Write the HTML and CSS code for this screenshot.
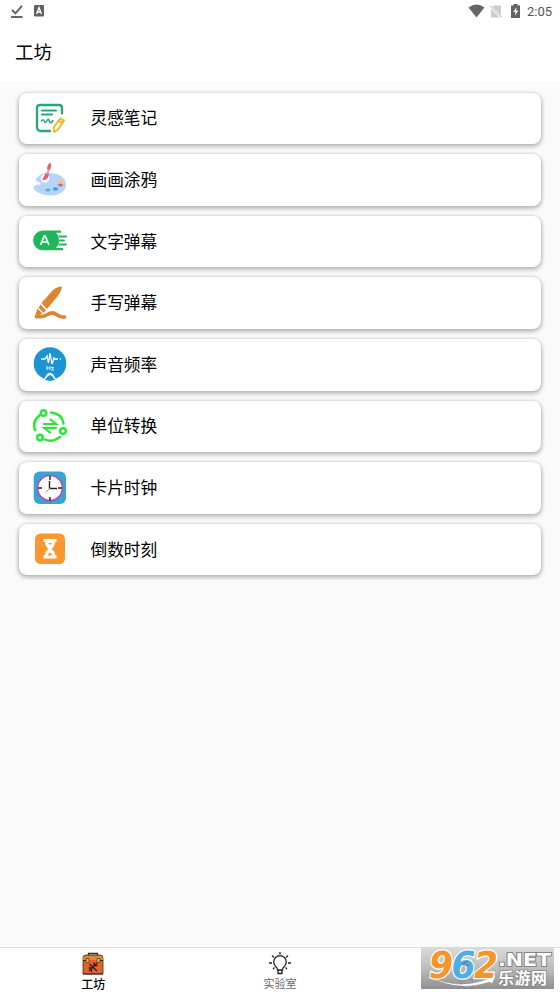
FILE: index.html
```html
<!DOCTYPE html>
<html lang="zh-CN">
<head>
<meta charset="utf-8">
<title>工坊</title>
<link rel="stylesheet" href="styles.css">
</head>
<body>
<div class="app">
  <div class="status">
    <svg class="s-check" width="14" height="15" viewBox="0 0 14 15"><path d="M2 6l3.400 3.300L12 1.800M1 13h11.500" fill="none" stroke="#666" stroke-width="2"/></svg>
    <svg class="s-lang" width="10" height="12" viewBox="0 0 10 12"><rect width="10" height="11.500" rx="1" fill="#626262"/><path d="M2.500 9L5 2.500 7.500 9M3.500 7h3" fill="none" stroke="#fff" stroke-width="1.300"/></svg>
    <span class="spacer"></span>
    <svg class="s-wifi" width="17" height="14" viewBox="0 0 17 14"><path d="M.5 3.500Q8.500-2.500 16.500 3.500L8.500 13.500z" fill="#666"/></svg>
    <svg class="s-sim" width="12" height="13" viewBox="0 0 12 13"><path d="M4 .5h7v12H1V4z" fill="#ccc"/><path d="M0 1l11.500 11.500" stroke="#fff" stroke-width="2.500"/><path d="M0 .5l12 12" stroke="#aaa"/></svg>
    <svg class="s-bat" width="9" height="14" viewBox="0 0 9 14"><path d="M0 1.500h2.500V0h4v1.500H9V14H0z" fill="#626262"/><path d="M5.500 3L2.300 8h2v3.500l3-5H5.200z" fill="#fff"/></svg>
    <span class="time">2:05</span>
  </div>
  <header class="title">工坊</header>
  <main class="list">
    <div class="card">
      <svg class="icon" viewBox="0 0 34 34"><g fill="none" stroke-linecap="round" stroke-linejoin="round"><path d="M29 12.500V7Q29 4 26 4H7Q4 4 4 7v19q0 4 4 4h9" stroke="#27a676" stroke-width="2.300"/><path d="M9 9.500h14M9 13.500h10" stroke="#27a676" stroke-width="2"/><path d="M8.500 20q2-2.500 3 .5 1 2.500 2.500-1 1.500-3 2.500 1 1 3 3.500-1" stroke="#27a676" stroke-width="1.500"/><path d="M27 17.500l4 2-6 9-4 2.500-.2-4.500z M25.500 20l4 2" stroke="#efbd24" stroke-width="2"/></g></svg>
      <span>灵感笔记</span>
    </div>
    <div class="card">
      <svg class="icon" viewBox="0 0 34 34"><path d="M5 14C10 7 33 9 33 21.500C33 31 21 34 12 32C6 30 .5 28 .5 24q2-3 6-2.300c2 0 1.500-2-.5-2.700C2 18 2 16.500 5 14z" fill="#b7d3fa"/><circle cx="12" cy="15.500" r="4.200" fill="#fff"/><path d="M9.500 16c1.500-2 2-4 3-6l3.500 1c-1 4-2 6-6.500 6z" fill="#e6606d"/><path d="M13.500 10l1.200-3 2 .5-.8 3z" fill="#b9a8bd"/><path d="M14 6.500q0-5 3.500-7 1.500 3-.5 7.500z" fill="#e6606d"/><ellipse cx="27.500" cy="18" rx="3" ry="2.300" fill="#e4c9a3"/><ellipse cx="27.500" cy="22" rx="2.500" ry="1.600" fill="#d4697d"/><ellipse cx="22.500" cy="26" rx="2.700" ry="1.700" fill="#4b9ae5"/><ellipse cx="15" cy="27" rx="2.700" ry="1.500" fill="#52b8b4"/></svg>
      <span>画画涂鸦</span>
    </div>
    <div class="card">
      <svg class="icon" viewBox="0 0 34 34"><path d="M10 6.500h18v2.300h-5q3 3 3 7.700t-3 7.500h7v2.300H10a9.900 9.900 0 0 1 0-19.800z" fill="#21b65b"/><path d="M7.500 21l3.700-9h1l3.800 9M9 18h5.500" fill="none" stroke="#fff" stroke-width="1.700"/><path d="M26.500 12.500H33M27 16.500h4M26.500 20.500H33" stroke="#21b65b" stroke-width="2" stroke-linecap="round"/></svg>
      <span>文字弹幕</span>
    </div>
    <div class="card">
      <svg class="icon" viewBox="0 0 34 34"><path d="M8.500 17L20 4q5-4 9-3.500-.5 5-5 10.500L14 23z" fill="#de862d"/><path d="M7.500 18.500l5.500 6-2.500 2.300-5-5z" fill="#de862d"/><path d="M4.500 22.500l5 5-8 4z" fill="#de862d"/><path d="M3.500 30.500q6 1 11-2 5-3 9 0t8 2.500" fill="none" stroke="#de862d" stroke-width="3.700" stroke-linecap="round"/></svg>
      <span>手写弹幕</span>
    </div>
    <div class="card">
      <svg class="icon" viewBox="0 0 34 34"><circle cx="17" cy="16.500" r="16.300" fill="#1b94d3"/><path d="M8 12h4l2-3 1.500 7L17 6l2 11 2-6 1 1h3M27 12h1" fill="none" stroke="#fff" stroke-width="1.300"/><path d="M14 19v4M14 21h3v-2M17 21v2M18 20.500h2.500l-2 2.500H21" fill="none" stroke="#dff1fa"/><path d="M10 34l4-7 3-1.500 3 1.500 4 7z" fill="#fff"/><path d="M12 33l3-4 2-1 2 1 3 4-5 1z" fill="#1b94d3"/></svg>
      <span>声音频率</span>
    </div>
    <div class="card">
      <svg class="icon" viewBox="0 0 34 34"><g fill="none" stroke="#29e637" stroke-width="2.500" stroke-linecap="round"><circle cx="10.500" cy="4" r="2.800"/><circle cx="7" cy="28.500" r="2.800"/><circle cx="30" cy="22" r="2.800"/><path d="M7 6Q-1 12 2 21M18 3.500q11 1 12.500 11M12 30.500q7 3.500 15-2.500"/><path d="M11 15h12l-5.500-4.500M23 19H11.500l5.500 4.500" stroke-width="2.200"/></g></svg>
      <span>单位转换</span>
    </div>
    <div class="card">
      <svg class="icon" viewBox="0 0 34 34"><rect x=".7" y=".5" width="32.300" height="32.500" rx="6" fill="#37a3d7"/><circle cx="17" cy="17" r="12.500" fill="#fff" stroke="#b84fa3" stroke-width="1.600"/><path d="M17 5v4M17 26v4M5 17h4M25 17h4M16.500 10v7.500H24" fill="none" stroke="#222" stroke-width="1.400"/><path d="M17 17l-4.500 4.500" stroke="#c98aba"/></svg>
      <span>卡片时钟</span>
    </div>
    <div class="card">
      <svg class="icon" viewBox="0 0 34 34"><rect x="2" y="1.500" width="30" height="30.500" rx="5.500" fill="#fb972e"/><path d="M10.500 7h13v3H22q0 4-3.500 7 3.500 2 3.500 6h1.500v3.500h-13V23H12q0-4 3.500-6Q12 14 12 10h-1.500z" fill="#fff"/><path d="M15 11h4l-2 2zM14.500 23.500L17 20l2.500 3.500z" fill="#fb972e"/></svg>
      <span>倒数时刻</span>
    </div>
  </main>
  <nav class="tabs">
    <div class="tab active">
      <svg width="24" height="24" viewBox="0 0 24 24"><path d="M7.500 4V1.500h9V4" fill="none" stroke="#332720" stroke-width="1.300"/><path d="M2 6q0-3 3-3h14q3 0 3 3v16H2z" fill="#e5602d" stroke="#49291b" stroke-width=".8"/><path d="M2 7q0-3 3-3h14q3 0 3 3v1H2z" fill="#db8a38"/><path d="M2 8.500h6M16 8.500h6M2 22h20" stroke="#33231b"/><path d="M5 6.500h3v4H5zM16 6.500h3v4h-3z" fill="#f0b34a" stroke="#402619" stroke-width=".6"/><path d="M8 19l8-8M8.500 12l7.500 7M13 10.500v3h3.500M7.500 16h3v4" fill="none" stroke="#2d211d" stroke-width="1.300"/></svg>
      <span>工坊</span>
    </div>
    <div class="tab">
      <svg width="24" height="24" viewBox="0 0 24 24"><g fill="none" stroke="#222" stroke-width="1.300"><path d="M9.500 18q0-2-2-3.700a6.300 6.300 0 1 1 9 0q-2 1.700-2 3.700zM10 18v3.500h4V18"/><path d="M12 0v2.500M4 3.500l2 2M20 3.500l-2 2M1 11h3M20 11h3M5 17l1.500-1.500M19 17l-1.500-1.500"/></g></svg>
      <span>实验室</span>
    </div>
    <div class="tab">
      <svg width="24" height="24" viewBox="0 0 24 24"><circle cx="12" cy="10" r="7" fill="none" stroke="#333"/><path d="M8 9h8M10 13h5" stroke="#333"/></svg>
      <span>关于</span>
    </div>
  </nav>
  <svg class="watermark" width="133" height="42" viewBox="0 0 133 42">
    <defs><linearGradient id="shade" x2="0" y2="1"><stop stop-color="#d9d9d9" stop-opacity=".94"/><stop offset=".5" stop-color="#b5b5b5" stop-opacity=".88"/><stop offset="1" stop-color="#808080" stop-opacity=".88"/></linearGradient></defs>
    <rect width="133" height="42" fill="url(#shade)"/>
    <path d="M6 28Q35 44 67 32l-2-2 10-2-4 9-2-2Q34 46 6 28z" fill="#fff" stroke="#888" stroke-width=".4"/>
    <g class="digits"><text x="8" y="30.500" textLength="24" lengthAdjust="spacingAndGlyphs" fill="#f79528">9</text><text x="30.500" y="30.500" textLength="24" lengthAdjust="spacingAndGlyphs" fill="#51aee2">6</text><text x="53" y="30.500" textLength="24" lengthAdjust="spacingAndGlyphs" fill="#f79528">2</text></g>
    <path d="M41 17l6-3M42 18h6" stroke="#668" fill="none"/>
    <text class="net" x="77" y="19" textLength="53" lengthAdjust="spacingAndGlyphs">.NET</text>
    <text class="site" x="77" y="37" textLength="49">乐游网</text>
  </svg>
</div>
</body>
</html>
```
FILE: styles.css
```css
* { box-sizing: border-box; }
body { margin: 0; background: #fafafa; color: #000; font-family: Roboto, "Noto Sans CJK SC", sans-serif; }
.app { height: 995px; display: flex; flex-direction: column; position: relative; overflow: hidden; }
svg { display: block; flex: none; }
.status { height: 24px; flex: none; background: #fff; display: flex; align-items: flex-start; padding: 4px 7px 0 10px; }
.s-lang { margin: 1px 0 0 10px; }
.spacer { flex: 1; }
.s-wifi { margin-right: 5px; }
.s-sim { margin: 1px 9px 0 0; }
.s-bat { margin-right: 7px; }
.time { width: 26px; font-size: 13px; line-height: 16px; color: #555; white-space: nowrap; }
.title { height: 58px; flex: none; background: #fff; padding: 15px 15px 0; font-size: 18.5px; line-height: 28px; }
.list { flex: none; padding: 10.7px 19px 5px; height: 498px; display: flex; flex-direction: column; gap: 10.1px; overflow: hidden; }
.card { height: 51.5px; flex: none; background: #fff; border-radius: 8px; box-shadow: 0 2px 4px 1px rgba(0,0,0,.24), 0 0 3px rgba(0,0,0,.12); display: flex; align-items: center; padding-left: 14px; font-size: 16.7px; line-height: 24px; }
.card span { padding-top: 2px; }
.icon { width: 34px; height: 34px; margin: -1px 23.5px 0 0; }
.tabs { height: 48px; margin-top: auto; flex: none; background: #fff; border-top: 1px solid #ddd; display: grid; grid-template-columns: repeat(3, 1fr); }
.tab { display: flex; flex-direction: column; align-items: center; padding-top: 4px; font-size: 11px; line-height: 16px; color: #666; }
.tab span { padding-top: 1px; }
.active { color: #000; font-size: 12px; font-weight: 500; }
.watermark { position: absolute; left: 421px; top: 947px; }
.digits { font: italic bold 37px "DejaVu Sans", sans-serif; stroke: #fff; stroke-width: 2.5px; paint-order: stroke; }
.net { font: bold 18px "DejaVu Sans", sans-serif; fill: #fff; stroke: #858585; stroke-width: 2px; paint-order: stroke; }
.site { font: bold 16px "Noto Sans CJK SC", sans-serif; fill: #fff; stroke: #858585; stroke-width: 1.5px; paint-order: stroke; }
```
